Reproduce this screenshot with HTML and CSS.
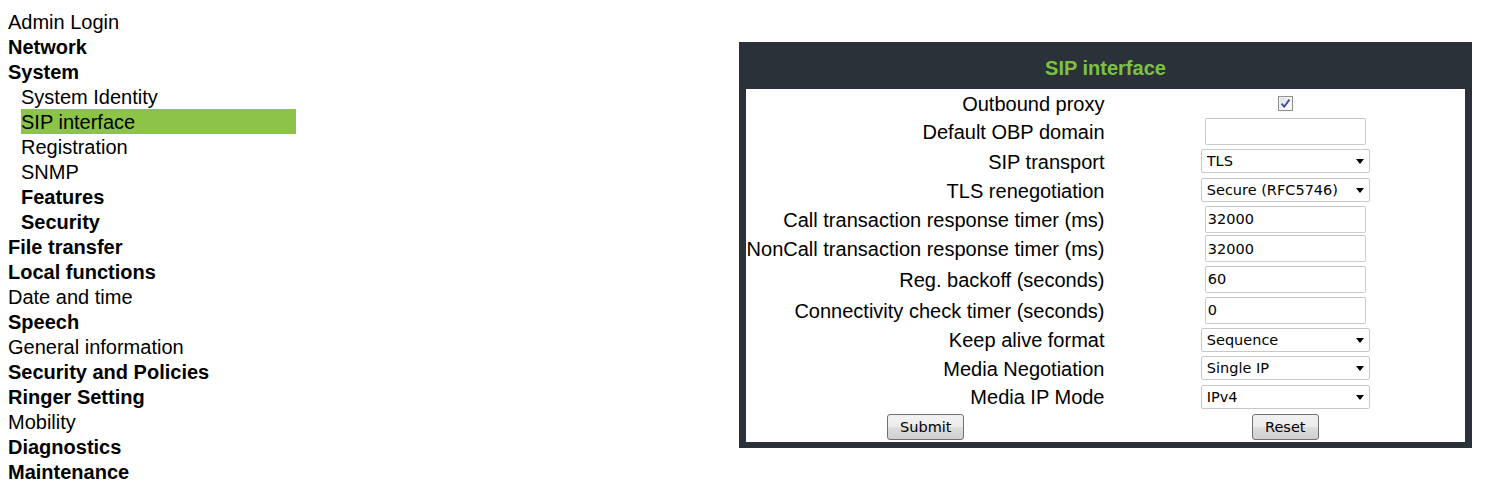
FILE: index.html
```html
<!DOCTYPE html>
<html>
<head>
<meta charset="utf-8">
<title>SIP interface</title>
<link rel="stylesheet" href="styles.css">
</head>
<body>
<div class="layout">
  <ul class="nav">
    <li>Admin Login</li>
    <li class="b">Network</li>
    <li class="b">System</li>
    <li class="sub">System Identity</li>
    <li class="sub active">SIP interface</li>
    <li class="sub">Registration</li>
    <li class="sub">SNMP</li>
    <li class="sub b">Features</li>
    <li class="sub b">Security</li>
    <li class="b">File transfer</li>
    <li class="b">Local functions</li>
    <li>Date and time</li>
    <li class="b">Speech</li>
    <li>General information</li>
    <li class="b">Security and Policies</li>
    <li class="b">Ringer Setting</li>
    <li>Mobility</li>
    <li class="b">Diagnostics</li>
    <li class="b">Maintenance</li>
  </ul>
  <div class="main">
    <div class="panel">
      <div class="panel-title">SIP interface</div>
      <form class="form">
        <div class="lbl">Outbound proxy</div>
        <div class="ctl"><span class="cb"><svg width="13" height="13" viewBox="0 0 13 13"><path d="M2.6 6.6 L5.2 9.7 L10.4 2.6" fill="none" stroke="#3b4f9c" stroke-width="1.9" stroke-linejoin="round"/></svg></span></div>

        <div class="lbl">Default OBP domain</div>
        <div class="ctl"><input class="txt" type="text" value=""></div>

        <div class="lbl">SIP transport</div>
        <div class="ctl"><span class="sel"><select><option>TLS</option></select></span></div>

        <div class="lbl">TLS renegotiation</div>
        <div class="ctl"><span class="sel"><select><option>Secure (RFC5746)</option></select></span></div>

        <div class="lbl">Call transaction response timer (ms)</div>
        <div class="ctl"><input class="txt" type="text" value="32000"></div>

        <div class="lbl">NonCall transaction response timer (ms)</div>
        <div class="ctl"><input class="txt" type="text" value="32000"></div>

        <div class="lbl">Reg. backoff (seconds)</div>
        <div class="ctl"><input class="txt" type="text" value="60"></div>

        <div class="lbl">Connectivity check timer (seconds)</div>
        <div class="ctl"><input class="txt" type="text" value="0"></div>

        <div class="lbl">Keep alive format</div>
        <div class="ctl"><span class="sel"><select><option>Sequence</option></select></span></div>

        <div class="lbl">Media Negotiation</div>
        <div class="ctl"><span class="sel"><select><option>Single IP</option></select></span></div>

        <div class="lbl">Media IP Mode</div>
        <div class="ctl"><span class="sel"><select><option>IPv4</option></select></span></div>

        <div class="ctl"><button type="button" class="btn">Submit</button></div>
        <div class="ctl"><button type="button" class="btn">Reset</button></div>
      </form>
    </div>
  </div>
</div>
</body>
</html>
```
FILE: styles.css
```css
html, body {
  margin: 0;
  padding: 0;
  background: #fff;
}
body {
  margin: 8px;
  font-family: "Liberation Sans", Arial, sans-serif;
  font-size: 20px;
  color: #000;
}
.layout {
  display: flex;
  align-items: flex-start;
}
.nav {
  list-style: none;
  margin: 0;
  padding: 1px 0 0 0;
  width: 288px;
  flex: none;
}
.nav li {
  box-sizing: border-box;
  height: 25px;
  padding-top: 2px;
  line-height: 23px;
  white-space: nowrap;
}
.nav .b {
  font-weight: bold;
}
.nav .sub {
  margin-left: 13px;
}
.nav .active {
  background: #8cc447;
}
.main {
  flex: 1;
  padding-top: 34px;
  padding-left: 443px;
}
.panel {
  width: 733px;
  background: #2b3138;
  padding: 0 7px 6px 7px;
  box-sizing: border-box;
}
.panel-title {
  height: 47px;
  box-sizing: border-box;
  padding-top: 14px;
  line-height: 24px;
  text-align: center;
  font-weight: bold;
  color: #7cc242;
}
.form {
  margin: 0;
  background: #fff;
  display: grid;
  grid-template-columns: 1fr 1fr;
  grid-template-rows: 28px 29px 30px 28px 30px 29px 32px 30px 29px 28px 29px 31px;
}
.lbl {
  align-self: center;
  text-align: right;
  padding-right: 1px;
  padding-top: 2px;
  white-space: nowrap;
  line-height: 23px;
}
.ctl {
  align-self: center;
  justify-self: center;
  display: flex;
  align-items: center;
}
.cb {
  display: inline-block;
  width: 15px;
  height: 15px;
  box-sizing: border-box;
  border: 1px solid #8e8f8f;
  background: linear-gradient(135deg, #d9dbde 0%, #f4f4f4 60%, #ffffff 100%);
  box-shadow: inset 0 0 0 1px #f2f2f2;
}
.cb svg {
  display: block;
}
.txt {
  width: 161px;
  height: 27px;
  box-sizing: border-box;
  border: 1px solid #cacccf;
  border-top-color: #c2c4c8;
  border-radius: 2px;
  padding: 0 2px;
  margin: 0;
  font-family: "DejaVu Sans", Tahoma, sans-serif;
  font-size: 14.5px;
  color: #000;
  background: #fff;
  outline: none;
}
.sel {
  display: inline-block;
  position: relative;
}
.sel select {
  -webkit-appearance: none;
  appearance: none;
  display: block;
  width: 169px;
  height: 24px;
  box-sizing: border-box;
  border: 1px solid #c6c8cc;
  border-radius: 2px;
  padding: 0 20px 0 5px;
  margin: 0;
  font-family: "DejaVu Sans", Tahoma, sans-serif;
  font-size: 14.5px;
  color: #000;
  background: #fff;
  outline: none;
}
.sel::after {
  content: "";
  position: absolute;
  right: 6px;
  top: 50%;
  margin-top: -2px;
  width: 0;
  height: 0;
  border-left: 4.5px solid transparent;
  border-right: 4.5px solid transparent;
  border-top: 5px solid #000;
  pointer-events: none;
}
.btn {
  height: 26px;
  box-sizing: border-box;
  padding: 0 12px;
  margin: 0;
  border: 1px solid #707070;
  border-radius: 3px;
  background: linear-gradient(to bottom, #f2f2f2 0%, #ebebeb 50%, #dddddd 51%, #cfcfcf 100%);
  font-family: "DejaVu Sans", Tahoma, sans-serif;
  font-size: 14.5px;
  color: #000;
  line-height: 22px;
}
```
